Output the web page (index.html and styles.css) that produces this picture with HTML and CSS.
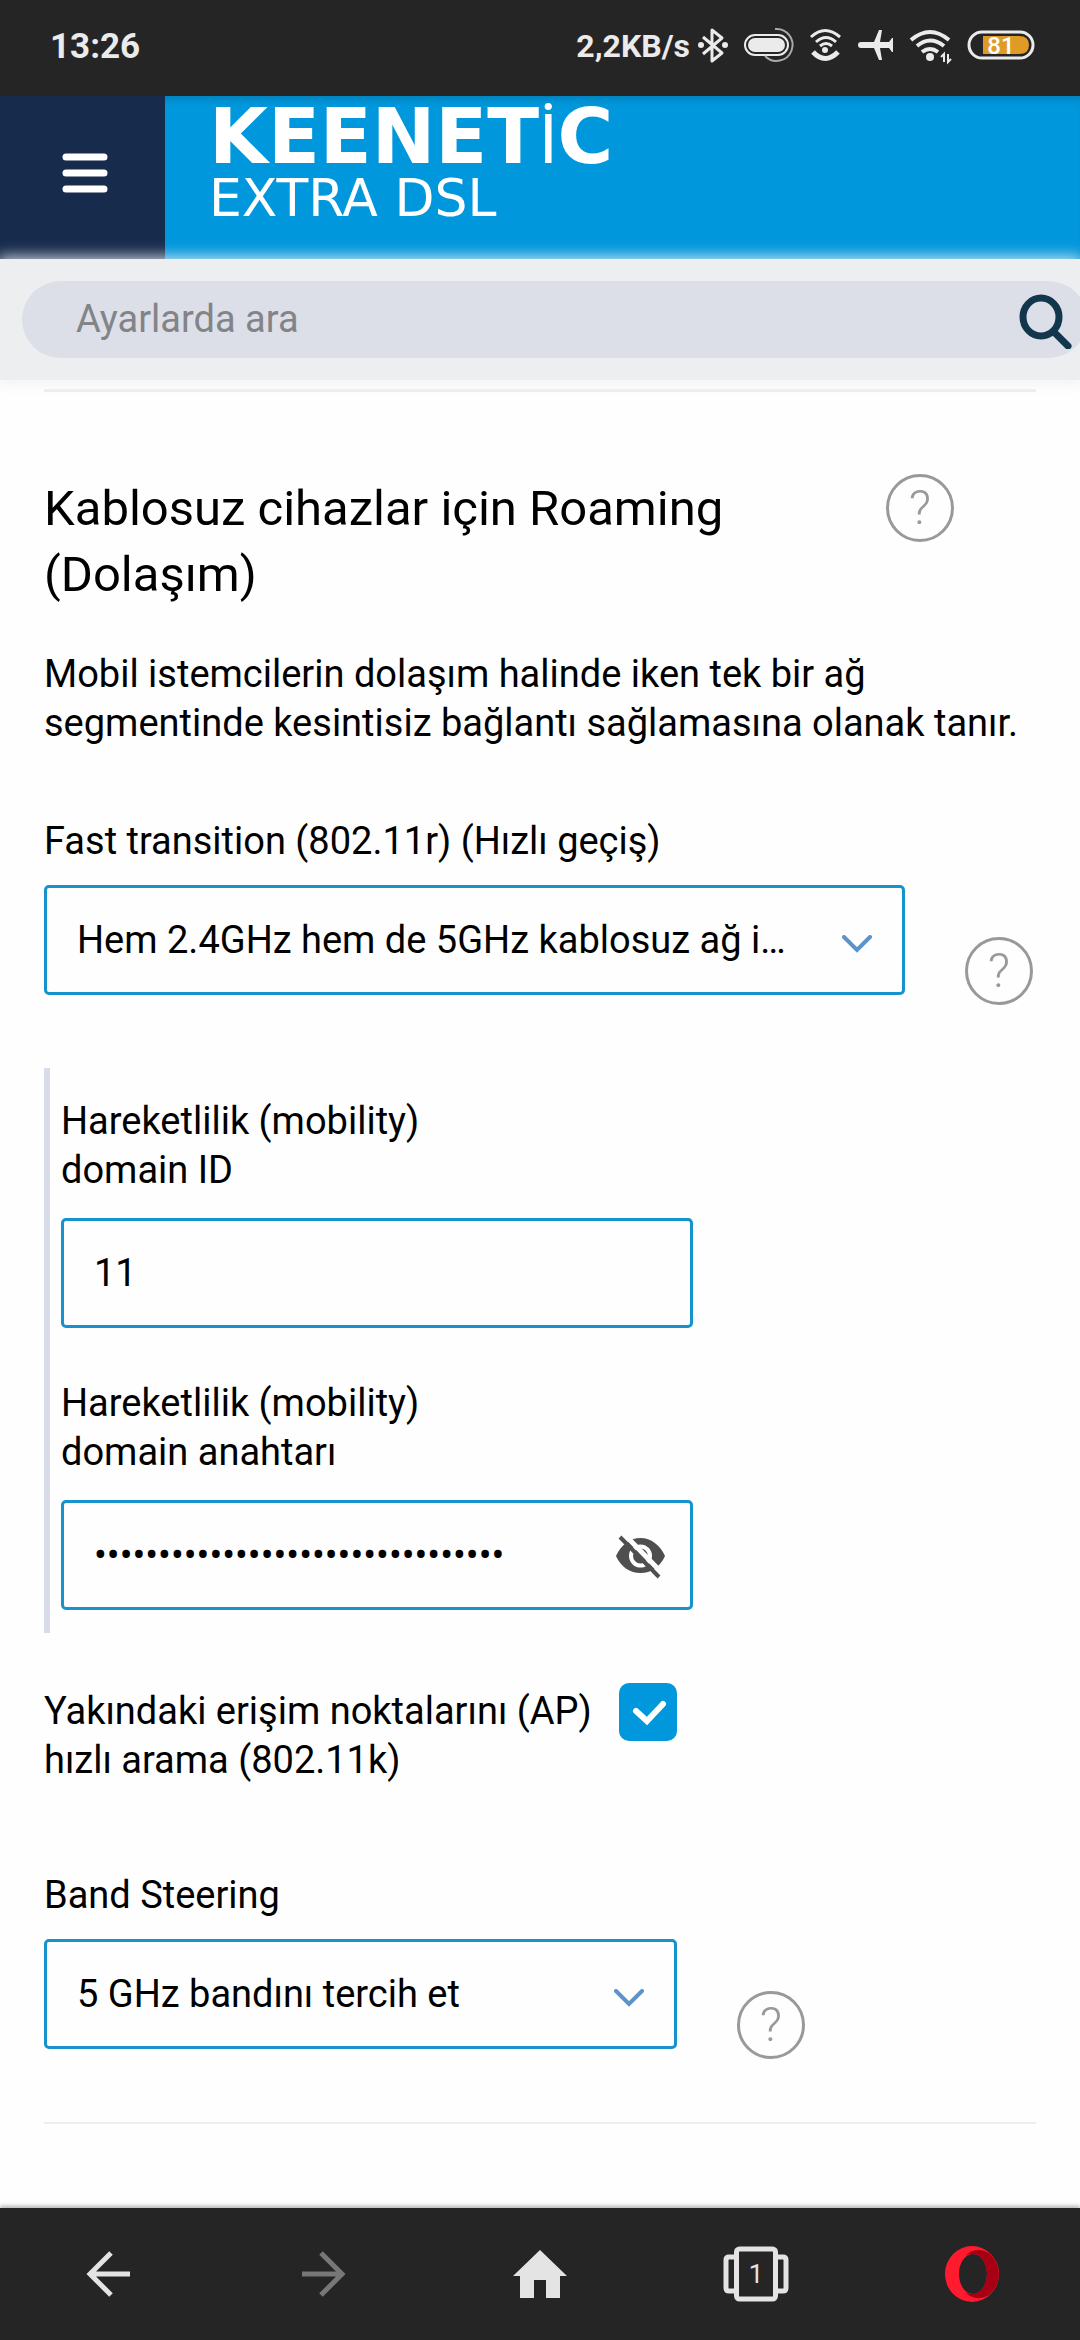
FILE: index.html
```html
<!DOCTYPE html>
<html lang="tr">
<head>
<meta charset="utf-8">
<meta name="viewport" content="width=device-width, initial-scale=1">
<title>Keenetic Extra DSL</title>
<link rel="stylesheet" href="styles.css">
</head>
<body>
<div class="status">
  <span class="clock">13:26</span>
  <div class="status-right">
    <span class="speed">2,2KB/s</span>
    <svg class="status-icons" width="344" height="40" viewBox="694 26 344 40" aria-hidden="true">
      <g fill="none" stroke="#ebebeb" stroke-width="3">
        <path d="M703 37l19 16-10 8V30l10 8-19 16" stroke-linejoin="round"/>
        <rect x="745" y="35" width="43" height="20" rx="10" stroke-width="2"/>
        <path d="M775 29a16 16 0 1 1-10 27" stroke-width="2" stroke="#aaa"/>
        <path d="M811 37q14-13 29 0M816 42q10-9 20 0M820 46q6-5 12 0"/>
        <path d="M813 52q12 13 25 0" stroke-width="5"/>
        <path d="M911 40q19-16 38 0" stroke-width="4"/>
        <path d="M917 46q13-11 27 0" stroke-width="4"/>
        <path d="M922 52q8-6 16 0" stroke-width="4"/>
        <path d="M944 62v-8l-3 3M948 54v8l3-3" stroke-width="2"/>
        <rect x="969" y="32" width="64" height="26" rx="13"/>
      </g>
      <g fill="#ebebeb">
        <circle cx="701" cy="45" r="3"/><circle cx="725" cy="45" r="3"/>
        <rect x="748" y="38" width="37" height="14" rx="7"/>
        <circle cx="825" cy="50" r="3"/>
        <path d="M858 45q0-3 3-3h13l5-12h3l-2 12h9l3-4h1v14h-1l-3-4h-9l2 12h-3l-5-12h-13q-3 0-3-3z"/>
        <circle cx="930" cy="57" r="4"/>
      </g>
      <path d="M983 36h36q10 0 10 9t-10 9h-36z" fill="#e09b26"/>
      <text x="1001" y="54" class="battery-text">81</text>
    </svg>
  </div>
</div>
<header class="header">
  <button class="menu" aria-label="Menü">
    <svg width="46" height="40" viewBox="0 0 46 40"><path d="M4 4h38M4 20h38M4 36h38" stroke="#fff" stroke-width="7" stroke-linecap="round"/></svg>
  </button>
  <div class="brand">
    <span class="brand-name">KEENET<span class="brand-i">İ</span>C</span>
    <span class="brand-model">EXTRA DSL</span>
  </div>
</header>
<form class="search">
  <div class="search-pill">
    <input class="search-input" type="text" placeholder="Ayarlarda ara" aria-label="Ayarlarda ara">
    <button class="search-button" type="button" aria-label="Ara">
      <svg width="56" height="58" viewBox="0 0 56 58" fill="none" stroke="#12374d" stroke-width="7"><ellipse cx="23" cy="26" rx="18" ry="19"/><path d="M36 41l14 14" stroke-linecap="round"/></svg>
    </button>
  </div>
</form>
<main class="content">
  <section class="card">
    <div class="title-row">
      <h1 class="title">Kablosuz cihazlar için Roaming (Dolaşım)</h1>
      <button class="help" aria-label="Yardım">?</button>
    </div>
    <p class="description">Mobil istemcilerin dolaşım halinde iken tek bir ağ segmentinde kesintisiz bağlantı sağlamasına olanak tanır.</p>
    <div class="field">
      <label class="label" for="ft">Fast transition (802.11r) (Hızlı geçiş)</label>
      <div class="control-row">
        <div class="select-wrap wide">
          <select class="box select" id="ft"><option>Hem 2.4GHz hem de 5GHz kablosuz ağ için</option></select>
          <svg class="chevron" width="30" height="18" viewBox="0 0 30 18"><path d="M2 2l13 13L28 2" fill="none" stroke="#5c93c8" stroke-width="4" stroke-linecap="round"/></svg>
        </div>
        <button class="help low" aria-label="Yardım">?</button>
      </div>
    </div>
    <div class="group">
      <div class="group-field">
        <label class="label narrow" for="mid">Hareketlilik (mobility) domain ID</label>
        <input class="box" id="mid" type="text" value="11">
      </div>
      <div class="group-field">
        <label class="label narrow" for="key">Hareketlilik (mobility) domain anahtarı</label>
        <div class="select-wrap">
          <input class="box password" id="key" type="password" value="abcdefghabcdefghabcdefghabcdefgh">
          <button class="eye" type="button" aria-label="Göster">
            <svg width="49" height="44" viewBox="0 0 49 44"><path d="M0 21C5 10 14 3 24.500 3S44 10 49 21C44 32 35 38 24.500 38S5 32 0 21z" fill="#4f4f4f"/><circle cx="24.500" cy="21" r="9.500" fill="none" stroke="#fff" stroke-width="4"/><path d="M7-2l40 41" stroke="#fff" stroke-width="5"/><path d="M4 2l39 40" stroke="#4f4f4f" stroke-width="4"/></svg>
          </button>
        </div>
      </div>
    </div>
    <div class="check-row">
      <label class="label check-label" for="k">Yakındaki erişim noktalarını (AP) hızlı arama (802.11k)</label>
      <input class="check" id="k" type="checkbox" checked>
    </div>
    <div class="field">
      <label class="label" for="bs">Band Steering</label>
      <div class="control-row">
        <div class="select-wrap medium">
          <select class="box select" id="bs"><option>5 GHz bandını tercih et</option></select>
          <svg class="chevron" width="30" height="18" viewBox="0 0 30 18"><path d="M2 2l13 13L28 2" fill="none" stroke="#5c93c8" stroke-width="4" stroke-linecap="round"/></svg>
        </div>
        <button class="help low" aria-label="Yardım">?</button>
      </div>
    </div>
  </section>
</main>
<nav class="nav">
  <button class="nav-button" aria-label="Geri"><svg width="44" height="46" viewBox="0 0 44 46" fill="none" stroke="#e4e4e4" stroke-width="5"><path d="M44 23H4M25 2L4 23l21 21"/></svg></button>
  <button class="nav-button" aria-label="İleri"><svg width="44" height="46" viewBox="0 0 44 46" fill="none" stroke="#777" stroke-width="5"><path d="M0 23h40M19 2l21 21-21 21"/></svg></button>
  <button class="nav-button" aria-label="Ana sayfa"><svg width="54" height="48" viewBox="0 0 54 48" fill="#e4e4e4"><path d="M27 0l27 26h-7v22H33V30H21v18H7V26H0z"/></svg></button>
  <button class="nav-button tabs" aria-label="Sekmeler"><svg width="66" height="56" viewBox="0 0 66 56" fill="none" stroke="#e4e4e4" stroke-width="5"><rect x="13.500" y="3" width="39" height="50" rx="3"/><path d="M13 11H6q-3 0-3 3v28q0 3 3 3h7M53 11h7q3 0 3 3v28q0 3-3 3h-7"/></svg><span class="tab-count">1</span></button>
  <button class="nav-button" aria-label="Opera"><svg width="54" height="56" viewBox="0 0 54 56"><path d="M27 0a27 28 0 1 0 0 56 27 28 0 1 0 0-56zM28 8c8 0 14 9 14 20s-6 20-14 20-14-9-14-20S20 8 28 8z" fill="#ff1b2d" fill-rule="evenodd"/><path d="M20 10c6-7 16-8 24-3 13 11 13 31 0 42-8 5-18 4-24-3 3 2 5 2 8 2 8 0 14-9 14-20S36 8 28 8c-3 0-5 0-8 2z" fill="#a70014"/></svg></button>
</nav>
</body>
</html>
```
FILE: styles.css
```css
* { box-sizing: border-box; }
html { height: 100%; }
body { margin: 0; min-height: 100%; display: flex; flex-direction: column; overflow-x: hidden; background: #fefefe; color: #000; font-family: Roboto, sans-serif; font-size: 38px; line-height: 49px; }
button { margin: 0; padding: 0; border: 0; background: none; font: inherit; color: inherit; }
svg { display: block; flex: none; }

.status { display: flex; justify-content: space-between; align-items: center; height: 96px; padding: 0 42px 4px 50px; background: #252525; color: #ebebeb; font-weight: 700; }
.clock { font-size: 35px; }
.status-right { display: flex; align-items: center; gap: 4px; }
.speed { font-size: 32px; }
.battery-text { fill: #fff; font-size: 24px; font-weight: 500; text-anchor: middle; }

.header { display: flex; height: 163px; background: #0097dc; box-shadow: inset 0 8px 8px -6px rgba(0, 0, 0, 0.2); }
.menu { display: flex; align-items: center; justify-content: center; width: 165px; padding: 0 0 9px 5px; background: #172b4d; }
.brand { display: flex; flex-direction: column; padding: 13px 0 0 44px; color: #fff; font-family: "DejaVu Sans", sans-serif; white-space: nowrap; }
.brand-name { font-size: 76px; font-weight: 700; line-height: 56px; }
.brand-i { font-family: Roboto, sans-serif; font-size: 68px; font-weight: 400; }
.brand-model { font-size: 52px; line-height: 60px; }

.search { position: relative; padding: 22px 0 22px 22px; background: #edeef0; box-shadow: 0 0 14px 2px rgba(237, 238, 240, 0.9); }
.search-pill { display: flex; align-items: center; height: 77px; margin-right: -7px; padding-right: 13px; border-radius: 39px; background: #dcdfe7; }
.search-input { flex: 1; min-width: 0; padding: 0 54px; border: 0; background: none; font: inherit; color: #000; }
.search-input::placeholder { color: #828488; opacity: 1; }

.content { flex: 1; padding: 9px 44px 0; }
.card { border-top: 3px solid #edeef0; border-bottom: 2px solid #ededed; padding: 82px 0 73px; }
.title-row { display: flex; align-items: flex-start; gap: 120px; }
.title { width: 722px; margin: 0; padding-top: 2px; font-size: 49px; line-height: 66px; font-weight: 400; }
.help { flex: none; width: 68px; height: 68px; border: 3px solid #999; border-radius: 50%; color: #999; font-size: 49px; font-weight: 300; line-height: 62px; }
.description { margin: 42px 0 69px; }
.label { display: block; }
.control-row { display: flex; align-items: flex-end; gap: 60px; margin-top: 19px; }
.low { margin-bottom: -10px; }
.select-wrap { position: relative; }
.wide { width: 861px; }
.medium { width: 633px; }
.box { display: block; width: 100%; height: 110px; padding: 0 30px; border: 3px solid #1692cc; border-radius: 5px; background: #fefefe; font: inherit; color: #000; }
.select { appearance: none; padding-right: 100px; text-overflow: ellipsis; overflow: hidden; white-space: nowrap; }
.chevron { position: absolute; right: 33px; top: 50px; }
.group { display: flex; flex-direction: column; gap: 51px; width: 649px; margin: 73px 0 50px; padding: 29px 0 23px 11px; border-left: 6px solid #d9dbe8; }
.narrow { width: 400px; margin-bottom: 23px; }
.eye { position: absolute; right: 28px; top: 35px; }
.check-row { display: flex; align-items: flex-start; gap: 19px; margin-bottom: 86px; }
.check-label { width: 556px; padding-top: 4px; }
.check { appearance: none; width: 58px; height: 58px; margin: 0; border-radius: 10px; background: #0097dc url("data:image/svg+xml,%3Csvg xmlns='http://www.w3.org/2000/svg' viewBox='0 0 58 58'%3E%3Cpath d='M17 28l11 10 16-17' fill='none' stroke='%23fff' stroke-width='6' stroke-linecap='round'/%3E%3C/svg%3E"); }

.nav { display: grid; grid-template-columns: repeat(5, 1fr); height: 132px; background: #252525; box-shadow: 0 -2px 4px rgba(0, 0, 0, 0.3); }
.nav-button { display: flex; align-items: center; justify-content: center; }
.tabs { position: relative; }
.tab-count { position: absolute; color: #e4e4e4; font-size: 26px; }
```
